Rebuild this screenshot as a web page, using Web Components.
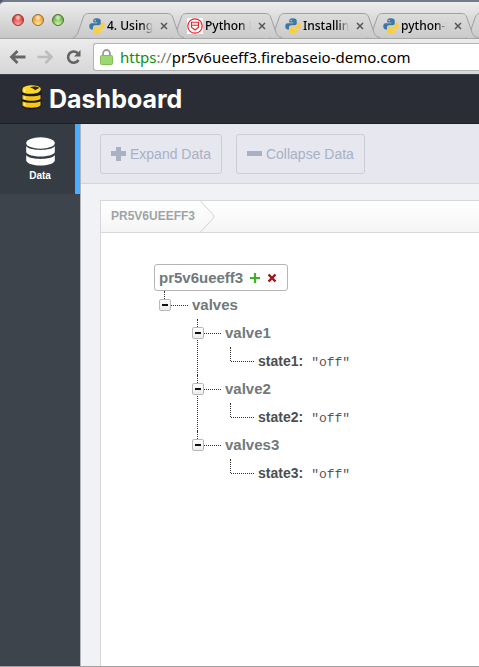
<!DOCTYPE html>
<html lang="en">
<head>
<meta charset="utf-8">
<title>Dashboard</title>
<style>
html, body { margin: 0; }
body { font-family: "Liberation Sans", Arial, sans-serif; background: #fff; }
</style>
</head>
<body>
<app-window></app-window>

<template id="t-icon-python">
<style>:host { display: block; width: 16px; height: 16px; } svg { display: block; width: 100%; height: 100%; }</style>
<svg viewBox="0 0 32 32" aria-hidden="true">
<path fill="#3b78a8" d="M15.800 .5C9.600 .5 8.500 3 8.500 5.500V9h8v1.300H5C2.300 10.300 .5 12.500 .5 16.200c0 3.900 1.700 6.600 4.400 6.600H8v-4.100c0-2.600 2.200-4.400 4.600-4.400h7c2.200 0 3.900-1.700 3.900-3.900V5.500C23.500 2.500 21.500 .5 15.800 .5zM12.300 3.600a1.500 1.500 0 1 1 0 3 1.500 1.500 0 0 1 0-3z"/>
<path fill="#fbcf3b" d="M16.200 31.500c6.200 0 7.300-2.500 7.300-5V23h-8v-1.300H27c2.700 0 4.500-2.200 4.500-5.900 0-3.900-1.700-6.600-4.400-6.600H24v4.100c0 2.600-2.200 4.400-4.600 4.400h-7c-2.200 0-3.900 1.700-3.900 3.900v4.900c0 3 2 5 7.700 5zM19.700 28.400a1.500 1.500 0 1 1 0-3 1.500 1.500 0 0 1 0 3z"/>
</svg>
</template>

<template id="t-icon-badge">
<style>:host { display: block; width: 16px; height: 16px; } svg { display: block; width: 100%; height: 100%; }</style>
<svg viewBox="0 0 16 16" fill="none" stroke="#e8242c" aria-hidden="true">
<path d="M0 0h16v16H0z" fill="#fff" stroke="none"/>
<circle cx="8" cy="8" r="7.200" stroke-width="1.200"/>
<path d="M4.500 4.200h7v5L8 12 4.500 9.200zM4.500 7.300h7" stroke-width="1.100"/>
</svg>
</template>

<template id="t-browser-tab">
<style>
:host { display: grid; width: 98px; flex: none; height: 25px; }
svg.shape { grid-area: 1 / 1; display: block; width: 113px; height: 25px; overflow: visible; }
.body { grid-area: 1 / 1; display: flex; align-items: center; padding: 0 0 0 16px; }
.title { all: unset; width: 46px; margin-left: 2px; overflow: hidden; white-space: nowrap;
  font: 500 12px/18px "Noto Sans", "Open Sans", sans-serif; color: #000;
  -webkit-mask-image: linear-gradient(90deg, #000 75%, transparent); mask-image: linear-gradient(90deg, #000 75%, transparent); }
.close { all: unset; display: block; width: 8px; height: 8px; margin-left: 7px; }
.close svg { display: block; width: 8px; height: 8px; }
</style>
<svg class="shape" viewBox="0 0 113 25" aria-hidden="true">
<defs><linearGradient id="g" x1="0" y1="0" x2="0" y2="1"><stop offset="0" stop-color="#dcdcdc"/><stop offset="1" stop-color="#cbcbcb"/></linearGradient></defs>
<path d="M0 24.500C3 24 4 22 5 19.500L10 5C11 2 12 .5 16 .5H94C98 .5 99 2 100 5L105 19.500C106 22 107 24 111 24.500" fill="url(#g)" stroke="#a0a0a0"/>
</svg>
<div class="body"><slot name="icon"></slot><button class="title" type="button" role="tab"><slot></slot></button>
<button class="close" type="button" aria-label="Close tab"><svg viewBox="0 0 8 8" stroke="#555" stroke-width="1.500"><path d="M1 1l6 6M7 1L1 7"/></svg></button></div>
</template>

<template id="t-browser-bar">
<style>
:host { display: block; overflow: hidden; background: #4c566b; }
.tabs { display: flex; align-items: flex-end; height: 36px; padding-left: 12px; border-top: 2px solid #747b8b; border-radius: 5px 0 0 0;
  background: linear-gradient(#ededed, #c6c6c6); }
.lights { display: flex; gap: 8px; width: 61px; flex: none; align-self: center; }
.lights button { all: unset; width: 12px; height: 12px; box-sizing: border-box; border-radius: 50%; border: 1px solid var(--e);
  background: radial-gradient(circle at 50% 25%, #fff9 0 12%, transparent 38%), radial-gradient(circle at 50% 95%, var(--l), var(--c) 65%); }
browser-tab { z-index: var(--z); }
.bar { display: flex; align-items: center; height: 35px; border-top: 1px solid #a7a7a7; background: linear-gradient(#ececec, #d6d6d6); }
.nav { all: unset; display: block; flex: none; width: 17px; height: 16px; }
.nav svg { display: block; width: 17px; height: 16px; }
form { display: flex; flex: 1; min-width: 0; align-items: center; height: 26px; margin: 0 0 0 11px; padding-left: 6px;
  border: 1px solid #b3b3b3; border-right: 0; border-radius: 3px 0 0 3px; background: #fff; font: 15px/24px "Noto Sans", "Open Sans", sans-serif; }
.lock { width: 13px; height: 16px; flex: none; margin-right: 7px; }
.scheme { color: #0a9114; } .sep { color: #777; }
input { flex: 1; min-width: 0; border: 0; padding: 0; margin: 0; outline: 0; background: none; font: inherit; color: #000; }
</style>
<div class="tabs">
<div class="lights">
<button type="button" aria-label="Close" style="--c:#e0443e;--l:#ffa9a0;--e:#96302c"></button>
<button type="button" aria-label="Minimize" style="--c:#eea236;--l:#ffe79a;--e:#9b6b25"></button>
<button type="button" aria-label="Zoom" style="--c:#6fb44c;--l:#d3f5a8;--e:#447230"></button>
</div>
<browser-tab style="--z:5"><icon-python slot="icon"></icon-python>4. Using</browser-tab>
<browser-tab style="--z:4"><icon-badge slot="icon"></icon-badge>Python Do</browser-tab>
<browser-tab style="--z:3"><icon-python slot="icon"></icon-python>Installing</browser-tab>
<browser-tab style="--z:2"><icon-python slot="icon"></icon-python>python-fi</browser-tab>
<browser-tab style="--z:1"></browser-tab>
</div>
<div class="bar">
<button class="nav" style="margin-left:9px" type="button" aria-label="Back"><svg viewBox="0 0 17 16" fill="none" stroke="#666" stroke-width="2.800"><path d="M16.500 8H3M8.500 2L2.500 8l6 6"/></svg></button>
<button class="nav" style="margin-left:11px" type="button" aria-label="Forward"><svg viewBox="0 0 17 16" fill="none" stroke="#bcbcbc" stroke-width="2.600"><path d="M.5 8H14M8.500 2l6 6-6 6"/></svg></button>
<button class="nav" style="margin-left:11px" type="button" aria-label="Reload"><svg viewBox="0 0 17 16" fill="none" stroke="#626262" stroke-width="2.600"><path d="M13.500 11A5.600 5.600 0 1 1 12.500 4"/><path d="M15.500 1v6.500H9z" fill="#626262" stroke="none"/></svg></button>
<form>
<svg class="lock" viewBox="0 0 13 16" aria-hidden="true"><path d="M3 8V4.500a3.500 3.500 0 0 1 7 0V8" fill="none" stroke="#9a9a9a" stroke-width="1.800"/><rect x=".5" y="6.500" width="12" height="9" rx="1" fill="#9bd96f" stroke="#82bd5c"/></svg>
<label for="url"><span class="scheme">https</span><span class="sep">://</span></label><input id="url" type="text" aria-label="Address" value="pr5v6ueeff3.firebaseio-demo.com">
</form>
</div>
</template>

<template id="t-dash-header">
<style>
:host { display: flex; align-items: center; gap: 6px; height: 50px; padding-left: 21px; background: #2a2d35; border-top: 1px solid #3c3f46; border-bottom: 1px solid #1f2127; box-sizing: border-box; flex: none; }
svg { width: 22px; height: 26px; flex: none; margin-bottom: 4px; }
h1 { margin: 0; color: #fff; font: 700 25px/32px Inter, "Noto Sans", sans-serif; }
</style>
<svg viewBox="0 0 22 26" aria-hidden="true">
<path d="M.5 5C1 0 20 0 20.500 5v16c0 6-20 6-20 0z" fill="#1c1a17"/>
<path d="M1.500 5C2 .5 17 0 19.500 3.800c.8 1.500 0 3.200-1.500 4.200-2 2-13 2.500-16 .5-.8-1-.8-2.500-.5-3.500z" fill="#fcd72e"/>
<path d="M9 3.500c3-1.800 7-1.200 9.500.3l-4.500 2.400c-1-1.400-3-1.900-5-2.700z" fill="#2c2413"/>
<path d="M1.500 11c4 1.800 14 1.800 18 0v4c-3 2.400-15 2.400-18 0zM1.500 17.400c4 1.800 14 1.800 18 0v4.200c-3 3-15 3-18 0z" fill="#f6c61c"/>
<path d="M3.500 5v3M3.500 12.500V15M3.500 19v2.500" stroke="#fff08a" stroke-width="1.500"/>
</svg>
<h1><slot></slot></h1>
</template>

<template id="t-side-nav">
<style>
:host { display: block; width: 80px; flex: none; background: #3e444c; }
a { display: flex; flex-direction: column; align-items: center; gap: 4px; box-sizing: border-box; height: 70px; padding-top: 13px;
  border-right: 5px solid #4badfd; background: #363c43; color: #fff; text-decoration: none; font: 700 10px/12px "Liberation Sans", Arial, sans-serif; padding-left: 5px; }
svg { width: 29px; height: 29px; }
</style>
<nav><a href="#data"><svg viewBox="0 0 29 29" fill="#fff" aria-hidden="true">
<ellipse cx="14.500" cy="6" rx="14.300" ry="5.800"/>
<path d="M.2 9c3 5.200 25.600 5.200 28.600 0v6.300c-2 5.600-26.600 5.600-28.600 0z"/>
<path d="M.2 18c3 5.200 25.600 5.200 28.600 0v5.800c-2 6.300-26.600 6.300-28.600 0z"/>
</svg><span><slot></slot></span></a></nav>
</template>

<template id="t-tool-button">
<style>
:host { display: block; }
button { display: flex; align-items: center; gap: 4px; box-sizing: border-box; height: 40px; padding: 0 10px; margin: 0; border: 1px solid #cbcedb; border-radius: 3px;
  background: transparent; color: #a9b1c4; font: 14px/20px "Liberation Sans", Arial, sans-serif; }
svg { display: block; width: 15px; height: 15px; }
:host([kind="collapse"]) .v { display: none; }
</style>
<button type="button"><svg viewBox="0 0 15 15" fill="#a9b1c4" aria-hidden="true"><path d="M0 4h15v5H0z"/><path class="v" d="M5 0h5v14H5z"/></svg><span><slot></slot></span></button>
</template>

<template id="t-crumb-bar">
<style>
:host { display: flex; height: 31px; border-bottom: 1px solid #d8d8d8; background: linear-gradient(#fff, #f5f5f5); }
a { padding-left: 10px; color: #9ea5a6; text-decoration: none; font: 700 12px/31px "Liberation Sans", Arial, sans-serif; }
svg { width: 16px; height: 31px; margin-left: 5px; }
</style>
<a href="#root"><slot></slot></a><svg viewBox="0 0 16 31" fill="none" stroke="#d3d3d3" aria-hidden="true"><path d="M.5 0L13 13.500q1.500 2 0 4L.5 31"/></svg>
</template>

<template id="t-tree-root">
<style>
:host { display: block; }
.root { display: inline-flex; align-items: center; box-sizing: border-box; height: 27px; padding: 0 10px 0 4px; border: 1px solid #b5b5b5; border-radius: 3px; background: #fff;
  color: #71797b; font: 700 15px/20px "Liberation Sans", Arial, sans-serif; vertical-align: top; }
button { all: unset; display: block; width: 10px; height: 10px; margin-left: 7px; }
svg { display: block; width: 10px; height: 10px; }
.kids { padding-left: 5px; }
</style>
<div class="root"><span>pr5v6ueeff3</span>
<button type="button" aria-label="Add child"><svg viewBox="0 0 10 10" stroke="#41b02a" stroke-width="2.200"><path d="M5 0v10M0 5h10"/></svg></button>
<button type="button" aria-label="Remove"><svg viewBox="0 0 10 10" stroke="#9e1216" stroke-width="2.400"><path d="M1.500 1.500l7 7M8.500 1.500l-7 7"/></svg></button></div>
<div class="kids"><slot></slot></div>
</template>

<template id="t-tree-node">
<style>
:host { display: grid; grid-template-columns: 12px 17px auto 1fr; grid-template-rows: 28px auto; align-items: center; }
.rail { grid-area: 1 / 1 / 3 / 2; align-self: stretch; margin-left: 5px; border-left: 1px dotted #333; }
:host(:last-child) .rail { grid-row: 1; height: 14px; align-self: start; }
.toggle { all: unset; grid-area: 1 / 1; z-index: 1; box-sizing: border-box; width: 12px; height: 12px; border: 1px solid #b9b9b9; border-radius: 2px; background: linear-gradient(#fff, #ececec); display: grid; place-items: center; }
.toggle::before { content: ""; width: 6px; height: 2px; background: #111; }
.arm { grid-area: 1 / 2; border-top: 1px dotted #333; }
:host([value]) .arm { grid-column: 1 / 3; margin-left: 6px; }
:host([value]) .toggle { display: none; }
.name { grid-area: 1 / 3; padding-left: 4px; color: #71797b; font: 700 15px/20px "Liberation Sans", Arial, sans-serif; }
:host([value]) .name { color: #4c4f50; font-size: 14px; }
.value { grid-area: 1 / 4; padding: 4px 0 0 8px; color: #555; font: 13px/20px "Liberation Mono", monospace; }
.kids { grid-area: 2 / 1 / 3 / 5; padding-left: 33px; }
</style>
<span class="rail"></span><button class="toggle" type="button" aria-label="Collapse"></button><span class="arm"></span>
<span class="name"></span><span class="value"></span>
<div class="kids"><slot></slot></div>
</template>

<template id="t-app-window">
<style>
:host { display: flex; flex-direction: column; min-height: 100vh; box-sizing: border-box; border-bottom: 1px solid #a0a0a0; }
.page { display: flex; flex: 1; }
main { display: flex; flex-direction: column; flex: 1; min-width: 0; background: #f1f2f6; border-left: 1px solid #b4b5ba; }
.tools { display: flex; gap: 14px; padding: 10px 19px 9px; border-bottom: 1px solid #d2d5df; background: #e6e7ef; }
.panel { flex: 1; margin: 16px 0 0 19px; border: 1px solid #d8d8d8; border-width: 1px 0 0 1px; background: #fff; }
tree-root { padding: 31px 20px 31px 53px; }
</style>
<browser-bar></browser-bar>
<dash-header>Dashboard</dash-header>
<div class="page">
<side-nav>Data</side-nav>
<main>
<div class="tools"><tool-button>Expand Data</tool-button><tool-button kind="collapse">Collapse Data</tool-button></div>
<section class="panel">
<crumb-bar>PR5V6UEEFF3</crumb-bar>
<tree-root>
<tree-node name="valves">
<tree-node name="valve1"><tree-node name="state1:" value='"off"'></tree-node></tree-node>
<tree-node name="valve2"><tree-node name="state2:" value='"off"'></tree-node></tree-node>
<tree-node name="valves3"><tree-node name="state3:" value='"off"'></tree-node></tree-node>
</tree-node>
</tree-root>
</section>
</main>
</div>
</template>

<script>
class TemplateElement extends HTMLElement {
  constructor() {
    super();
    const template = document.getElementById("t-" + this.localName);
    this.attachShadow({ mode: "open" }).append(document.importNode(template.content, true));
  }
}
class TreeNode extends TemplateElement {
  connectedCallback() {
    this.shadowRoot.querySelector(".name").textContent = this.getAttribute("name");
    this.shadowRoot.querySelector(".value").textContent = this.getAttribute("value") || "";
    this.shadowRoot.querySelector(".toggle").onclick = () => {
      const kids = this.shadowRoot.querySelector(".kids");
      kids.hidden = !kids.hidden;
    };
  }
}
customElements.define("tree-node", TreeNode);
for (const name of ["icon-python", "icon-badge", "browser-tab", "browser-bar", "dash-header", "side-nav",
  "tool-button", "crumb-bar", "tree-root", "app-window"]) {
  customElements.define(name, class extends TemplateElement {});
}
</script>
</body>
</html>
